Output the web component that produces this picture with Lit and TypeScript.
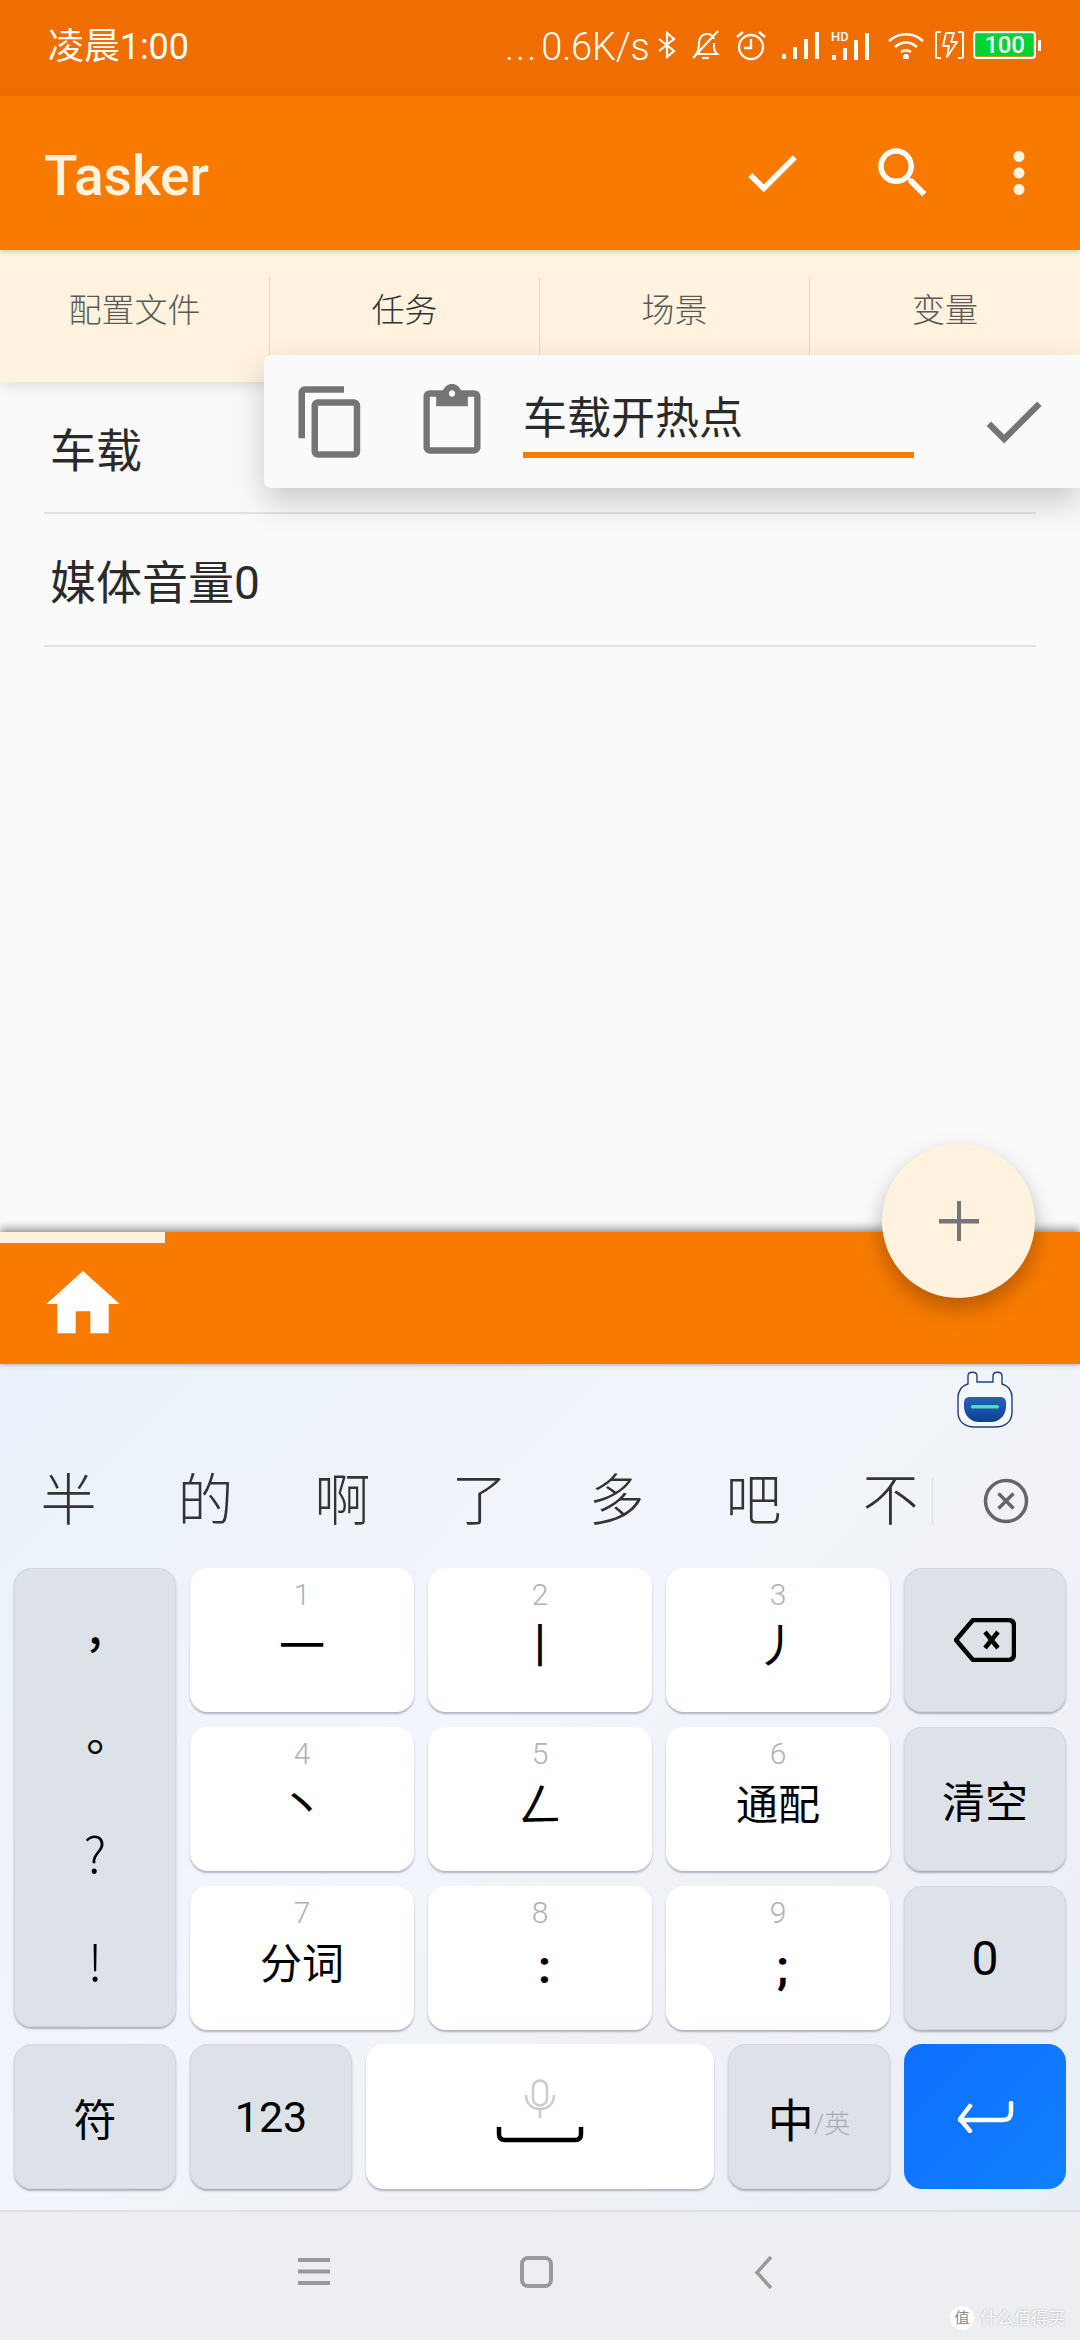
import { LitElement, html, css, svg } from "lit";
import { customElement } from "lit/decorators.js";

const P = {
  check: "M9 16.17L4.83 12l-1.42 1.41L9 19 21 7l-1.41-1.41z",
  search: "M15.5 14h-.79l-.28-.27C15.41 12.59 16 11.11 16 9.5 16 5.91 13.09 3 9.5 3S3 5.91 3 9.5 5.91 16 9.5 16c1.61 0 3.09-.59 4.23-1.57l.27.28v.79l5 4.99L20.49 19l-4.99-5zm-6 0C7.01 14 5 11.99 5 9.5S7.01 5 9.5 5 14 7.01 14 9.5 11.99 14 9.5 14z",
  more: "M12 8c1.1 0 2-.9 2-2s-.9-2-2-2-2 .9-2 2 .9 2 2 2zm0 2c-1.1 0-2 .9-2 2s.9 2 2 2 2-.9 2-2-.9-2-2-2zm0 6c-1.1 0-2 .9-2 2s.9 2 2 2 2-.9 2-2-.9-2-2-2z",
  copy: "M16 1H4c-1.1 0-2 .9-2 2v14h2V3h12V1zm3 4H8c-1.1 0-2 .9-2 2v14c0 1.1.9 2 2 2h11c1.1 0 2-.9 2-2V7c0-1.1-.9-2-2-2zm0 16H8V7h11v14z",
  paste: "M19 2h-4.18C14.4.84 13.3 0 12 0c-1.3 0-2.4.84-2.82 2H5c-1.1 0-2 .9-2 2v16c0 1.1.9 2 2 2h14c1.1 0 2-.9 2-2V4c0-1.1-.9-2-2-2zm-7 0c.55 0 1 .45 1 1s-.45 1-1 1-1-.45-1-1 .45-1 1-1zm7 18H5V4h2v3h10V4h2v16z",
  home: "M10 20v-6h4v6h5v-8h3L12 3 2 12h3v8z",
};
const mi = (d: string, cls: string) => html`<svg class=${cls} viewBox="0 0 24 24"><path d=${d} fill="currentColor"></path></svg>`;

const bars = (w: number, h: number) => svg`
  <rect x=${w - 37} y=${h - 5} width="4" height="5"></rect>
  <rect x=${w - 26} y=${h - 12} width="4" height="12"></rect>
  <rect x=${w - 15} y=${h - 20} width="4" height="20"></rect>
  <rect x=${w - 4} y=${h - 27} width="4" height="27"></rect>`;

@customElement("app-root")
export class AppRoot extends LitElement {
  static styles = css`
    :host { display: block; width: 1080px; height: 2340px; overflow: hidden; position: relative;
      font-family: Roboto, "Noto Sans CJK SC", "Liberation Sans", sans-serif; }
    .page { display: flex; flex-direction: column; height: 2340px; background: #fafafa; }

    .status { height: 96px; flex: none; background: #f06d00; color: #fff; display: flex; align-items: center;
      padding: 0 0 0 48px; box-sizing: border-box; }
    .time { font-size: 36px; line-height: 96px; width: 457px; letter-spacing: -0.1px; margin-top: -2px; white-space: nowrap; }
    .speed { font-size: 38px; width: 153px; white-space: nowrap; margin-top: -2px; letter-spacing: -0.2px; font-weight: 300; }
    .dots { letter-spacing: 2px; margin-right: 3px; }
    .st { display: block; flex: none; color: #fff; margin-top: -6px; }
    .st.bt { width: 18px; height: 28px; margin-right: 15px; }
    .st.bell { width: 30px; height: 30px; margin-right: 14px; }
    .st.alarm { width: 32px; height: 32px; margin-right: 14px; }
    .st.sig { width: 38px; height: 28px; margin-right: 12px; }
    .st.hd { width: 38px; height: 30px; margin-right: 18px; }
    .st.wifi { width: 38px; height: 28px; margin-right: 10px; }
    .st.chg { width: 29px; height: 28px; margin-right: 9px; }
    .batt { flex: none; width: 63px; height: 28px; box-sizing: border-box; border: 2px solid #fff; border-radius: 4px; margin-top: -6px;
      background: #00d332; color: #fff; font-size: 24px; font-weight: 500; line-height: 24px; text-align: center; letter-spacing: -0.3px; box-shadow: inset 0 0 0 1px #c99b2a; }
    .nub { flex: none; width: 3px; height: 11px; margin: -6px 0 0 2px; background: #fff; }

    .appbar { height: 154px; flex: none; background: #f87b00; display: flex; align-items: center; padding-left: 44px; box-sizing: border-box;
      position: relative; z-index: 3; box-shadow: 0 2px 5px rgba(0,0,0,.16); color: #fff; }
    .title { font-size: 55px; font-weight: 500; color: #fff3e0; flex: 1; padding-top: 5px; }
    .ai { width: 66px; height: 66px; display: block; flex: none; }
    .ai.c { margin-right: 65px; }
    .ai.s { margin-right: 50px; }
    .ai.m { margin-right: 28px; color: #fff3e0; }

    .tabs { height: 132px; flex: none; display: flex; background: #fff3e0; position: relative; z-index: 2;
      box-shadow: 0 3px 14px rgba(0,0,0,.13); padding-top: 27px; box-sizing: border-box; }
    .tab { width: 270px; height: 105px; flex: none; box-sizing: border-box; border-right: 1px solid #e4d9c8; text-align: center;
      font-size: 33px; line-height: 68px; color: #5c5a55; font-weight: 300; }
    .tab.on { color: #35332f; }
    .tab:last-child { border-right: none; flex: 1; }

    .list { flex: 1; padding: 0 44px; background: #fafafa; min-height: 0; }
    .row { height: 132px; box-sizing: border-box; border-bottom: 2px solid #e2e2e2; font-size: 46px; line-height: 139px; color: #2a2a2a; padding-left: 6px; font-weight: 400; }
    .row + .row { height: 133px; }

    .popup { position: absolute; left: 264px; top: 355px; width: 816px; height: 133px; background: #fafafa; border-radius: 7px 0 0 7px;
      box-shadow: 0 14px 34px rgba(0,0,0,.2); z-index: 4; display: flex; align-items: center; padding-left: 28px; box-sizing: border-box; color: #757575; }
    .pi { display: block; flex: none; }
    .pi.copy { width: 78px; height: 78px; margin-right: 44px; }
    .pi.paste { width: 76px; height: 76px; margin-right: 33px; }
    .pi.ok { width: 75px; height: 75px; margin-left: 62px; }
    .field { width: 391px; height: 88px; margin-bottom: 15px; flex: none; box-sizing: border-box; border-bottom: 6px solid #f87b00; font-size: 44px; line-height: 98px; color: #2a2a2a; white-space: nowrap; font-weight: 400; }

    .bar { height: 132px; flex: none; background: #f87b00; position: relative; box-shadow: 0 -3px 9px rgba(0,0,0,.45); z-index: 1; padding: 28px 0 0 39px; box-sizing: border-box; color: #fff; }
    .ind { position: absolute; left: 0; top: 0; width: 165px; height: 11px; background: #fff3e0; }
    .hm { width: 88px; height: 88px; display: block; }
    .fab { position: absolute; left: 882px; top: 1144px; width: 153px; height: 154px; border-radius: 50%; background: #fff3e0; z-index: 5;
      box-shadow: 0 10px 22px rgba(0,0,0,.28); display: flex; align-items: center; justify-content: center; }
    .fab svg { width: 40px; height: 40px; display: block; }

    .kb { flex: none; height: 846px; box-sizing: border-box; position: relative; border-top: 2px solid #dfe2e6;
      background: linear-gradient(135deg, #eaf2fb 0%, #eef3fa 22%, #f2f5fb 42%, #eff1f6 70%, #e9eef6 100%); }
    .robotrow { height: 68px; display: flex; justify-content: flex-end; padding: 5px 66px 0 0; box-sizing: border-box; }
    .robot { width: 58px; height: 58px; display: block; }
    .cands { height: 134px; display: flex; align-items: center; position: relative; box-sizing: border-box; }
    .cand { width: 137px; flex: none; text-align: center; font-size: 56px; color: #333; font-weight: 300; line-height: 136px; }
    .sep { width: 1px; height: 47px; background: #d8dbe0; flex: none; margin-left: -27px; }
    .x { width: 46px; height: 46px; display: block; margin-left: 50px; flex: none; }

    .keys { display: grid; grid-template-columns: 162px 224px 224px 224px 162px; grid-template-rows: 144px 144px 144px; column-gap: 14px; row-gap: 15px; padding: 0 14px; }
    .key { border-radius: 18px; background: #fff; box-shadow: 0 2px 2px rgba(120,130,150,.55); position: relative; display: flex; flex-direction: column; align-items: center; color: #000; }
    .fn { background: #dde2e8; box-shadow: 0 2px 2px rgba(120,130,150,.6), inset 0 0 0 1px #d3d8e0; }
    .left { grid-row: 1 / span 3; grid-column: 1; height: 459px; justify-content: space-around; font-size: 50px; padding: 14px 0 14px; box-sizing: border-box; font-weight: 300; font-family: "Noto Sans CJK TC", sans-serif; }
    .left span { line-height: 56px; }
    .left .comma { font-weight: 500; font-size: 46px; margin-top: -12px; margin-bottom: 12px; }
    .left .dot { font-weight: 400; font-size: 46px; }
    .num { font-size: 30px; line-height: 34px; margin-top: 10px; color: #aeb2b8; font-weight: 300; }
    .gl { font-size: 46px; line-height: 66px; margin-top: 1px; color: #000; font-weight: 400; }
    .pn { font-weight: 700; padding-left: 9px; margin-top: 4px; }
    .cn { font-size: 42px; font-weight: 400; line-height: 66px; margin-top: 2px; }
    .center { justify-content: center; font-size: 43px; font-weight: 400; }
    .del { width: 62px; height: 44px; display: block; }
    .bottom { display: flex; gap: 14px; padding: 14px 14px 0; }
    .bottom .key { width: 162px; height: 145px; flex: none; justify-content: center; }
    .bottom .space { flex: 1; width: auto; padding-bottom: 12px; box-sizing: border-box; gap: 9px; }
    .blue { background: linear-gradient(135deg, #0f6fff, #1080ff); box-shadow: none; }
    .zero { font-size: 48px; font-weight: 400; }
    .zh { flex-direction: row; font-size: 46px; align-items: center; }
    .zh small { font-size: 26px; color: #a8abb0; margin-top: 10px; font-weight: 300; }
    .mic { width: 32px; height: 39px; display: block; }
    .spc { width: 88px; height: 16px; display: block; }
    .ent { width: 57px; height: 32px; display: block; }

    .nav { flex: none; height: 130px; background: #eceef2; border-top: 2px solid #dcdfe4; box-sizing: border-box; position: relative; }
    .navi { position: absolute; display: block; }
    .navi.menu { left: 298px; top: 46px; width: 32px; height: 27px; }
    .navi.homeb { left: 520px; top: 44px; width: 33px; height: 32px; }
    .navi.back { left: 754px; top: 44px; width: 20px; height: 33px; }
    .wm { position: absolute; left: 950px; bottom: 8px; display: flex; align-items: center; gap: 6px; color: #fff; font-size: 17px; line-height: 28px; font-weight: 400; text-shadow: 0 0 2px rgba(120,120,120,.7); white-space: nowrap; }
    .wmc { width: 24px; height: 24px; border-radius: 50%; background: #fff; color: #8a8a8a; font-size: 15px; line-height: 24px; text-align: center; text-shadow: none; flex: none; }
  `;

  render() {
    const digits: [string, string, string][] = [
      ["1", "一", "gl"], ["2", "丨", "gl"], ["3", "丿", "gl"],
      ["4", "丶", "gl"], ["5", "ㄥ", "gl"], ["6", "通配", "cn"],
      ["7", "分词", "cn"], ["8", ":", "gl pn"], ["9", ";", "gl pn"],
    ];
    const key = (i: number) => {
      const [n, g, c] = digits[i];
      return html`<div class="key"><span class="num">${n}</span><span class=${c}>${g}</span></div>`;
    };
    return html`
      <div class="page">
        <div class="status">
          <span class="time">凌晨1:00</span>
          <span class="speed"><span class="dots">...</span>0.6K/s</span>
          <svg class="st bt" viewBox="0 0 18 28" fill="none" stroke="currentColor" stroke-width="2.2"><path d="M1 8l15 12-7 6V2l7 6L1 20"></path></svg>
          <svg class="st bell" viewBox="0 0 30 30" fill="none" stroke="currentColor" stroke-width="2.2"><path d="M5 24c3-3 3-7 3-11 0-5 3-9 8-9 3 0 6 2 7 5M23 13v5c0 2 1 4 3 6H5"></path><path d="M2 28L27 1"></path><path d="M11 28h7"></path></svg>
          <svg class="st alarm" viewBox="0 0 32 32" fill="none" stroke="currentColor" stroke-width="2.4"><circle cx="16" cy="18" r="12"></circle><path d="M16 10v9h-7M2 8l6-5M30 8l-6-5"></path></svg>
          <svg class="st sig" viewBox="0 0 38 28" fill="currentColor">${bars(38, 28)}</svg>
          <svg class="st hd" viewBox="0 0 38 30" fill="currentColor">${bars(38, 30)}<text x="0" y="11" font-size="13" font-weight="500" font-family="Roboto">HD</text></svg>
          <svg class="st wifi" viewBox="0 0 38 28" fill="none" stroke="currentColor" stroke-width="2.6"><path d="M2 10c10-9 24-9 34 0M8 16c7-6 15-6 22 0M14 21c3-2 7-2 10 0"></path><circle cx="19" cy="26" r="1.6" fill="currentColor"></circle></svg>
          <svg class="st chg" viewBox="0 0 29 28" fill="none" stroke="currentColor" stroke-width="2"><path d="M6 1H2.500Q1 1 1 2.500V25.500Q1 27 2.500 27H6M23 1h3.500Q28 1 28 2.500V25.500Q28 27 26.500 27H23"></path><path d="M11 2h8l-3 9h6L12 26l2-11H8z" stroke-width="1.800" stroke-linejoin="round"></path></svg>
          <div class="batt">100</div><div class="nub"></div>
        </div>

        <div class="appbar">
          <span class="title">Tasker</span>
          ${mi(P.check, "ai c")}${mi(P.search, "ai s")}${mi(P.more, "ai m")}
        </div>

        <div class="tabs">
          <div class="tab">配置文件</div>
          <div class="tab on">任务</div>
          <div class="tab">场景</div>
          <div class="tab">变量</div>
        </div>

        <div class="list">
          <div class="row">车载</div>
          <div class="row">媒体音量0</div>
        </div>

        <div class="bar"><div class="ind"></div>${mi(P.home, "hm")}</div>

        <div class="kb">
          <div class="robotrow">
            <svg class="robot" viewBox="0 0 58 58">
              <defs><linearGradient id="rv" x1="0" y1="0" x2="0" y2="1"><stop offset="0" stop-color="#2a62b8"></stop><stop offset="1" stop-color="#0c3f94"></stop></linearGradient></defs>
              <path d="M12 13V5c0-5 9-5 9 0v6h16V5c0-5 9-5 9 0v8c7 2 10 7 10 14v14c0 10-7 15-17 15H19C9 56 2 51 2 41V27c0-7 3-12 10-14z" fill="#f6f7fb" stroke="#1f3f7e" stroke-width="1.400"></path>
              <path d="M14 26h30c4 0 6 2 6 6v3c0 10-7 16-15 16H23c-8 0-15-6-15-16v-3c0-4 2-6 6-6z" fill="url(#rv)"></path>
              <rect x="15" y="34" width="28" height="3.500" rx="1.500" fill="#3de8c0"></rect>
            </svg>
          </div>
          <div class="cands">
            <span class="cand">半</span><span class="cand">的</span><span class="cand">啊</span><span class="cand">了</span><span class="cand">多</span><span class="cand">吧</span><span class="cand">不</span>
            <span class="sep"></span>
            <svg class="x" viewBox="0 0 46 46" fill="none" stroke="#666" stroke-width="3.500"><circle cx="23" cy="23" r="20.500"></circle><path d="M15.500 15.500l15 15M30.500 15.500l-15 15"></path></svg>
          </div>
          <div class="keys">
            <div class="key fn left"><span class="comma">,</span><span class="dot">。</span><span>?</span><span>!</span></div>
            ${key(0)}${key(1)}${key(2)}
            <div class="key fn center">
              <svg class="del" viewBox="0 0 62 44" fill="none" stroke="#000" stroke-width="4.500" stroke-linejoin="round"><path d="M19 2h35q6 0 6 6v28q0 6-6 6H19L2 22z"></path><path d="M31 14l13 16M44 14L31 30"></path></svg>
            </div>
            ${key(3)}${key(4)}${key(5)}
            <div class="key fn center">清空</div>
            ${key(6)}${key(7)}${key(8)}
            <div class="key fn center zero">0</div>
          </div>
          <div class="bottom">
            <div class="key fn center">符</div>
            <div class="key fn center">123</div>
            <div class="key space">
              <svg class="mic" viewBox="0 0 32 39" fill="none" stroke="#c9cbcf" stroke-width="2.500"><rect x="9" y="1.500" width="14" height="25" rx="7"></rect><path d="M2 16c0 9 6 14 14 14s14-5 14-14M16 30v9"></path></svg>
              <svg class="spc" viewBox="0 0 88 16" fill="none" stroke="#000" stroke-width="4.500"><path d="M3 0v7q0 6 6 6h70q6 0 6-6V0"></path></svg>
            </div>
            <div class="key fn center zh">中<small>/英</small></div>
            <div class="key blue center">
              <svg class="ent" viewBox="0 0 57 32" fill="none" stroke="#fff" stroke-width="4.500" stroke-linecap="round" stroke-linejoin="round"><path d="M54 2v9q0 8-8 8H3M13 5L3 18l10 12"></path></svg>
            </div>
          </div>
        </div>

        <div class="nav">
          <svg class="navi menu" viewBox="0 0 32 27" fill="#999"><rect y="0" width="32" height="4"></rect><rect y="11.500" width="32" height="4"></rect><rect y="23" width="32" height="4"></rect></svg>
          <svg class="navi homeb" viewBox="0 0 33 32" fill="none" stroke="#999" stroke-width="4"><rect x="2" y="2" width="29" height="28" rx="6"></rect></svg>
          <svg class="navi back" viewBox="0 0 20 33" fill="none" stroke="#999" stroke-width="3.500"><path d="M17 1L3 16.500l14 15.500"></path></svg>
          <div class="wm"><span class="wmc">值</span><span>什么值得买</span></div>
        </div>
      </div>

      <div class="popup">
        ${mi(P.copy, "pi copy")}${mi(P.paste, "pi paste")}
        <div class="field">车载开热点</div>
        ${mi(P.check, "pi ok")}
      </div>
      <div class="fab"><svg viewBox="0 0 40 40" fill="#757575"><rect x="18" y="0" width="4" height="40"></rect><rect x="0" y="18" width="40" height="4.500"></rect></svg></div>
    `;
  }
}
